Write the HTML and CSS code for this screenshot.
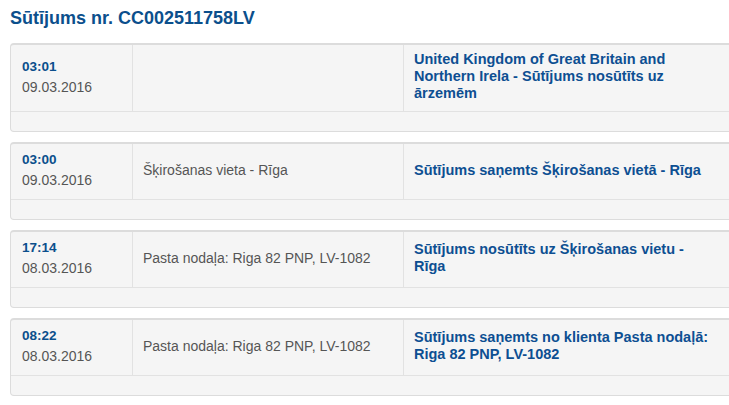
FILE: index.html
```html
<!DOCTYPE html>
<html lang="lv">
<head>
<meta charset="utf-8">
<title>Sūtījums nr. CC002511758LV</title>
<link rel="stylesheet" href="styles.css">
</head>
<body>
<div class="track">
  <h1 class="title">Sūtījums nr. CC002511758LV</h1>
  <div class="events">
    <div class="event">
      <div class="event-row">
        <div class="cell cell-time"><div class="time">03:01</div><div class="date">09.03.2016</div></div>
        <div class="cell cell-place"></div>
        <div class="cell cell-status">United Kingdom of Great Britain and Northern Irela - Sūtījums nosūtīts uz ārzemēm</div>
        <div class="cell cell-rest"></div>
      </div>
      <div class="event-foot"></div>
    </div>
    <div class="event">
      <div class="event-row">
        <div class="cell cell-time"><div class="time">03:00</div><div class="date">09.03.2016</div></div>
        <div class="cell cell-place">Šķirošanas vieta - Rīga</div>
        <div class="cell cell-status">Sūtījums saņemts Šķirošanas vietā - Rīga</div>
        <div class="cell cell-rest"></div>
      </div>
      <div class="event-foot"></div>
    </div>
    <div class="event">
      <div class="event-row">
        <div class="cell cell-time"><div class="time">17:14</div><div class="date">08.03.2016</div></div>
        <div class="cell cell-place">Pasta nodaļa: Riga 82 PNP, LV-1082</div>
        <div class="cell cell-status">Sūtījums nosūtīts uz Šķirošanas vietu - Rīga</div>
        <div class="cell cell-rest"></div>
      </div>
      <div class="event-foot"></div>
    </div>
    <div class="event">
      <div class="event-row">
        <div class="cell cell-time"><div class="time">08:22</div><div class="date">08.03.2016</div></div>
        <div class="cell cell-place">Pasta nodaļa: Riga 82 PNP, LV-1082</div>
        <div class="cell cell-status">Sūtījums saņemts no klienta Pasta nodaļā: Riga 82 PNP, LV-1082</div>
        <div class="cell cell-rest"></div>
      </div>
      <div class="event-foot"></div>
    </div>
  </div>
</div>
</body>
</html>
```

FILE: styles.css
```css
html, body {
  margin: 0;
  padding: 0;
  overflow: hidden;
  background: #fff;
}
body {
  font-family: "Liberation Sans", Arial, sans-serif;
  font-size: 14px;
  color: #555;
}
.track {
  padding: 8px 0 0 10px;
  width: 800px;
}
.title {
  margin: 0 0 15px;
  font-size: 18px;
  line-height: 20px;
  font-weight: bold;
  color: #0b4f8c;
}
.events {
  display: flex;
  flex-direction: column;
  gap: 10px;
}
.event {
  background: #f5f5f5;
  border: 1px solid #dcdcdc;
  border-top: 2px solid #dcdcdc;
  border-radius: 4px;
}
.event-row {
  display: grid;
  grid-template-columns: 122px 271px 320px 1fr;
  border-bottom: 1px solid #e2e2e2;
}
.cell {
  padding: 6px 10px 9px;
  display: flex;
  flex-direction: column;
  justify-content: center;
  border-right: 1px solid #e2e2e2;
  line-height: 20px;
}
.cell-time {
  padding-left: 11px;
}
.cell-status, .cell-rest {
  border-right: 0;
}
.time {
  font-size: 13.5px;
  font-weight: bold;
  color: #0b4f8c;
}
.date {
  font-size: 14px;
  color: #555;
}
.cell-status {
  font-size: 14.5px;
  font-weight: bold;
  color: #0d4f92;
  line-height: 17px;
}
.event-foot {
  height: 19px;
}
```
